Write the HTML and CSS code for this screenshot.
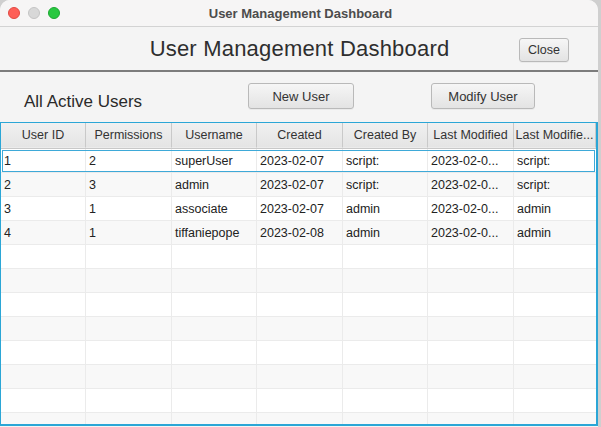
FILE: index.html
```html
<!DOCTYPE html>
<html>
<head>
<meta charset="utf-8">
<link rel="stylesheet" href="styles.css">
</head>
<body>
<div class="window">
  <div class="titlebar">
    <div class="lights">
      <span class="light red"></span>
      <span class="light gray"></span>
      <span class="light green"></span>
    </div>
    <div class="wintitle">User Management Dashboard</div>
  </div>
  <div class="header">
    <div></div>
    <h1 class="heading">User Management Dashboard</h1>
    <div class="close-wrap"><button class="btn close">Close</button></div>
  </div>
  <div class="toolbar">
    <div class="subtitle">All Active Users</div>
    <button class="btn new">New User</button>
    <button class="btn modify">Modify User</button>
  </div>
  <div class="table">
    <div class="row head">
      <div class="cell">User ID</div>
      <div class="cell">Permissions</div>
      <div class="cell">Username</div>
      <div class="cell">Created</div>
      <div class="cell">Created By</div>
      <div class="cell">Last Modified</div>
      <div class="cell">Last Modifie...</div>
    </div>
    <div class="row even focused">
      <div class="cell">1</div><div class="cell">2</div><div class="cell">superUser</div><div class="cell">2023-02-07</div><div class="cell">script:</div><div class="cell">2023-02-0...</div><div class="cell">script:</div>
    </div>
    <div class="row odd">
      <div class="cell">2</div><div class="cell">3</div><div class="cell">admin</div><div class="cell">2023-02-07</div><div class="cell">script:</div><div class="cell">2023-02-0...</div><div class="cell">script:</div>
    </div>
    <div class="row even">
      <div class="cell">3</div><div class="cell">1</div><div class="cell">associate</div><div class="cell">2023-02-07</div><div class="cell">admin</div><div class="cell">2023-02-0...</div><div class="cell">admin</div>
    </div>
    <div class="row odd">
      <div class="cell">4</div><div class="cell">1</div><div class="cell">tiffaniepope</div><div class="cell">2023-02-08</div><div class="cell">admin</div><div class="cell">2023-02-0...</div><div class="cell">admin</div>
    </div>
    <div class="row even"><div class="cell"></div><div class="cell"></div><div class="cell"></div><div class="cell"></div><div class="cell"></div><div class="cell"></div><div class="cell"></div></div>
    <div class="row odd"><div class="cell"></div><div class="cell"></div><div class="cell"></div><div class="cell"></div><div class="cell"></div><div class="cell"></div><div class="cell"></div></div>
    <div class="row even"><div class="cell"></div><div class="cell"></div><div class="cell"></div><div class="cell"></div><div class="cell"></div><div class="cell"></div><div class="cell"></div></div>
    <div class="row odd"><div class="cell"></div><div class="cell"></div><div class="cell"></div><div class="cell"></div><div class="cell"></div><div class="cell"></div><div class="cell"></div></div>
    <div class="row even"><div class="cell"></div><div class="cell"></div><div class="cell"></div><div class="cell"></div><div class="cell"></div><div class="cell"></div><div class="cell"></div></div>
    <div class="row odd"><div class="cell"></div><div class="cell"></div><div class="cell"></div><div class="cell"></div><div class="cell"></div><div class="cell"></div><div class="cell"></div></div>
    <div class="row even"><div class="cell"></div><div class="cell"></div><div class="cell"></div><div class="cell"></div><div class="cell"></div><div class="cell"></div><div class="cell"></div></div>
    <div class="row odd"><div class="cell"></div><div class="cell"></div><div class="cell"></div><div class="cell"></div><div class="cell"></div><div class="cell"></div><div class="cell"></div></div>
  </div>
</div>
</body>
</html>
```

FILE: styles.css
```css
html, body {
  margin: 0;
  padding: 0;
  width: 601px;
  height: 427px;
  overflow: hidden;
  background: #cfcfcf;
  font-family: "Liberation Sans", Arial, sans-serif;
}

.window {
  width: 598px;
  height: 427px;
  background: #f4f4f4;
  border-top-left-radius: 10px;
  border-top-right-radius: 10px;
  overflow: hidden;
  display: flex;
  flex-direction: column;
}

.titlebar {
  height: 26px;
  flex: none;
  background: #f6f5f5;
  border-bottom: 1px solid #d3d3d3;
  display: grid;
  grid-template-columns: 1fr;
  align-items: center;
  position: relative;
}

.lights {
  position: absolute;
  left: 8px;
  top: 7px;
  display: flex;
  gap: 8px;
}

.light {
  width: 12px;
  height: 12px;
  border-radius: 50%;
  display: block;
  box-sizing: border-box;
}
.light.red { background: #fe5f57; border: 0.5px solid #e14942; }
.light.gray { background: #d8d8d8; border: 0.5px solid #c4c4c4; }
.light.green { background: #28c840; border: 0.5px solid #1ca731; }

.wintitle {
  text-align: center;
  font-weight: bold;
  font-size: 13px;
  color: #4c4c4c;
  padding-left: 3px;
}

.header {
  height: 43px;
  flex: none;
  display: grid;
  grid-template-columns: 1fr auto 1fr;
  align-items: center;
  border-bottom: 2px solid #7c7c7c;
}

.heading {
  margin: 0;
  font-weight: normal;
  font-size: 22px;
  color: #2e2e2e;
  letter-spacing: 0.2px;
  padding-left: 1px;
  padding-top: 1px;
}

.close-wrap {
  display: flex;
  justify-content: flex-end;
  padding-right: 29px;
}

.btn {
  font-family: "Liberation Sans", Arial, sans-serif;
  font-size: 13px;
  color: #333;
  height: 26px;
  border: 1px solid #b9b9b9;
  border-radius: 3px;
  background: linear-gradient(#f6f6f6, #e3e3e3);
  padding: 0;
  box-shadow: 0 1px 0 rgba(0,0,0,0.04);
}

.btn.close {
  width: 50px;
  height: 24px;
  font-size: 12.5px;
  margin-top: 2px;
}

.toolbar {
  height: 50px;
  flex: none;
  display: flex;
  align-items: center;
  padding-left: 24px;
  box-sizing: border-box;
}

.subtitle {
  font-size: 17px;
  color: #2a2a2a;
  width: 224px;
  margin-top: 10px;
}

.btn.new {
  width: 106px;
  margin-top: -2px;
}

.btn.modify {
  width: 104px;
  margin-left: 77px;
  margin-top: -2px;
}

.table {
  flex: 1;
  border: 1px solid #2ba6d6;
  border-right-width: 2px;
  border-bottom-width: 2px;
  margin-bottom: 1px;
  background: #fff;
  overflow: hidden;
}

.row {
  display: grid;
  grid-template-columns: 85px 86px 85px 86px 85px 86px 1fr;
  height: 24px;
  font-size: 12.5px;
  color: #222;
}

.row.head {
  height: 25px;
  background: linear-gradient(#f0f0f0, #e4e4e4);
  border-bottom: 1px solid #c8c8c8;
  color: #333;
}

.row.head .cell {
  justify-content: center;
  padding-left: 0;
  border-right: 1px solid #c9c9c9;
}

.row.even { background: #ffffff; }
.row.odd { background: #f8f8f8; }

.row.focused {
  outline: 1px solid #3ea9d8;
  outline-offset: -2px;
}

.cell {
  display: flex;
  align-items: center;
  padding-left: 3px;
  border-right: 1px solid #ebebeb;
  border-bottom: 1px solid #ebebeb;
  white-space: nowrap;
  overflow: hidden;
  box-sizing: border-box;
}

.cell:last-child { border-right: none; }
```
